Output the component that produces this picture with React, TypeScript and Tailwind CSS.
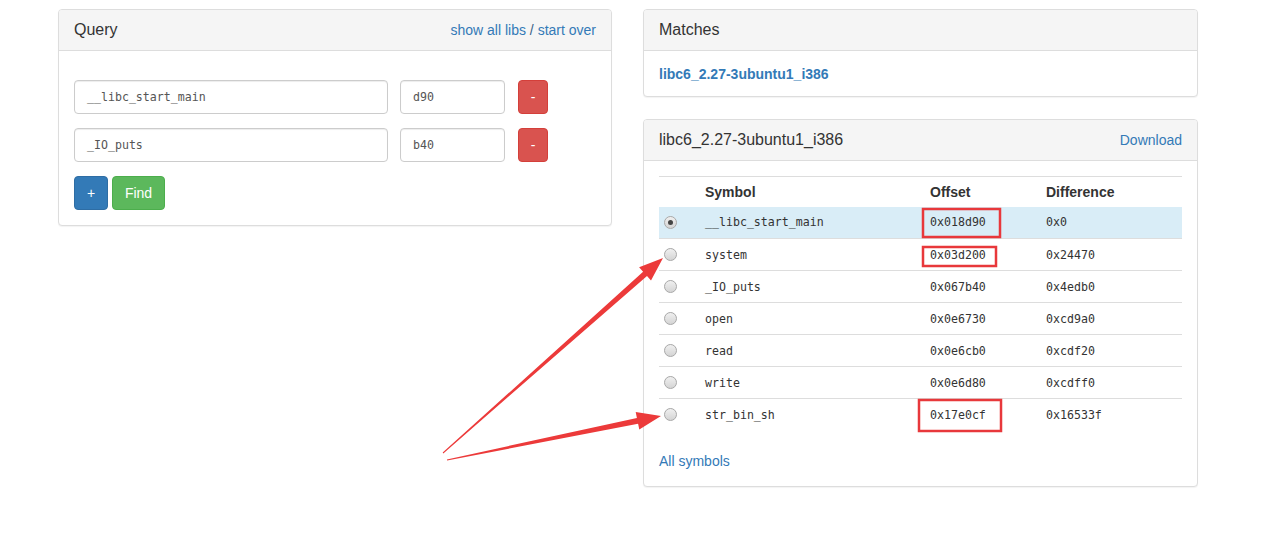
import React from 'react';

const queryRows = [
  { name: '__libc_start_main', addr: 'd90' },
  { name: '_IO_puts', addr: 'b40' },
];

const symbols = [
  { name: '__libc_start_main', offset: '0x018d90', diff: '0x0', checked: true },
  { name: 'system', offset: '0x03d200', diff: '0x24470' },
  { name: '_IO_puts', offset: '0x067b40', diff: '0x4edb0' },
  { name: 'open', offset: '0x0e6730', diff: '0xcd9a0' },
  { name: 'read', offset: '0x0e6cb0', diff: '0xcdf20' },
  { name: 'write', offset: '0x0e6d80', diff: '0xcdff0' },
  { name: 'str_bin_sh', offset: '0x17e0cf', diff: '0x16533f' },
];

const mono = "font-['DejaVu_Sans_Mono',monospace] text-[11.6px]";

function Radio({ checked }: { checked?: boolean }) {
  return (
    <span className="flex h-[13px] w-[13px] items-center justify-center rounded-full border border-[#a9a9a9] bg-gradient-to-b from-[#f0f0f0] to-[#d4d4d4]">
      {checked && <span className="h-[5px] w-[5px] rounded-full bg-[#444]" />}
    </span>
  );
}

function PanelHeading({ title, children }: { title: string; children?: React.ReactNode }) {
  return (
    <div className="flex h-[41px] items-center justify-between border-b border-[#ddd] bg-[#f5f5f5] px-[15px] rounded-t-[3px]">
      <h3 className="text-[16px] text-[#333]">{title}</h3>
      {children}
    </div>
  );
}

export default function App() {
  return (
    <div className="relative min-h-[541px] bg-white font-['Liberation_Sans',Arial,sans-serif] text-[14px] leading-[20px] text-[#333]">
      <div className="flex gap-[31px] pl-[58px] pt-[9px]">
        {/* query panel */}
        <div className="h-fit w-[554px] rounded-[4px] border border-[#ddd] bg-white shadow-[0_1px_1px_rgba(0,0,0,0.05)]">
          <PanelHeading title="Query">
            <div className="text-[#337ab7]">
              show all libs <span className="text-[#3a5f86]">/</span> start over
            </div>
          </PanelHeading>
          <div className="px-[15px] pb-[15px] pt-[29px]">
            <div className="flex flex-col gap-[14px]">
              {queryRows.map((r) => (
                <div key={r.name} className="flex items-center">
                  <div className={`flex h-[34px] w-[314px] items-center rounded-[4px] border border-[#ccc] px-[12px] text-[#555] shadow-[inset_0_1px_1px_rgba(0,0,0,0.075)] ${mono}`}>
                    {r.name}
                  </div>
                  <div className={`ml-[12px] flex h-[34px] w-[105px] items-center rounded-[4px] border border-[#ccc] px-[12px] text-[#555] shadow-[inset_0_1px_1px_rgba(0,0,0,0.075)] ${mono}`}>
                    {r.addr}
                  </div>
                  <button className="ml-[13px] flex h-[34px] w-[30px] items-center justify-center rounded-[4px] border border-[#d43f3a] bg-[#d9534f] text-white">
                    -
                  </button>
                </div>
              ))}
              <div className="flex gap-[4px]">
                <button className="flex h-[34px] w-[34px] items-center justify-center rounded-[4px] border border-[#2e6da4] bg-[#337ab7] text-white">
                  +
                </button>
                <button className="flex h-[34px] w-[53px] items-center justify-center rounded-[4px] border border-[#4cae4c] bg-[#5cb85c] text-white">
                  Find
                </button>
              </div>
            </div>
          </div>
        </div>

        {/* right column */}
        <div className="flex w-[555px] flex-col gap-[22px]">
          <div className="rounded-[4px] border border-[#ddd] bg-white shadow-[0_1px_1px_rgba(0,0,0,0.05)]">
            <PanelHeading title="Matches" />
            <div className="flex h-[45px] items-center px-[15px]">
              <a className="font-bold text-[#337ab7]">libc6_2.27-3ubuntu1_i386</a>
            </div>
          </div>

          <div className="rounded-[4px] border border-[#ddd] bg-white shadow-[0_1px_1px_rgba(0,0,0,0.05)]">
            <PanelHeading title="libc6_2.27-3ubuntu1_i386">
              <a className="text-[#337ab7]">Download</a>
            </PanelHeading>
            <div className="px-[15px] pb-[15px] pt-[15px]">
              <table className="w-[523px] border-collapse">
                <thead>
                  <tr className="h-[30px] border-t border-[#ddd] text-left font-bold">
                    <th className="w-[38px]" />
                    <th className="w-[225px] pl-[8px]">Symbol</th>
                    <th className="w-[116px] pl-[8px]">Offset</th>
                    <th className="pl-[8px]">Difference</th>
                  </tr>
                </thead>
                <tbody className={mono}>
                  {symbols.map((s, i) => (
                    <tr
                      key={s.name}
                      className={`h-[32px] ${i > 0 ? 'border-t border-[#ddd]' : ''} ${s.checked ? 'bg-[#d9edf7]' : ''}`}
                    >
                      <td className="pl-[5px]">
                        <Radio checked={s.checked} />
                      </td>
                      <td className="pl-[8px]">{s.name}</td>
                      <td className="pl-[8px]">{s.offset}</td>
                      <td className="pl-[8px]">{s.diff}</td>
                    </tr>
                  ))}
                </tbody>
              </table>
              <div className="mt-[20px]">
                <a className="text-[#337ab7]">All symbols</a>
              </div>
            </div>
          </div>
        </div>
      </div>

      {/* screenshot annotations */}
      <svg className="pointer-events-none absolute left-0 top-0" width="1271" height="541">
        <g fill="none" stroke="#e8383b" strokeWidth="2.5">
          <rect x="923" y="209" width="77" height="28" />
          <rect x="923" y="247" width="73" height="19" />
          <rect x="919" y="400" width="82" height="31" />
        </g>
        <g fill="#ec3a3a">
          <polygon points="443.3,453.4 647,276.1 651,280.6 663,258 639.1,267.2 643.1,271.7 442.7,452.6" />
          <polygon points="447.1,460.5 638.1,423.7 639.3,429.6 661,416 635.7,412 636.9,417.9 446.9,459.5" />
        </g>
      </svg>
    </div>
  );
}
